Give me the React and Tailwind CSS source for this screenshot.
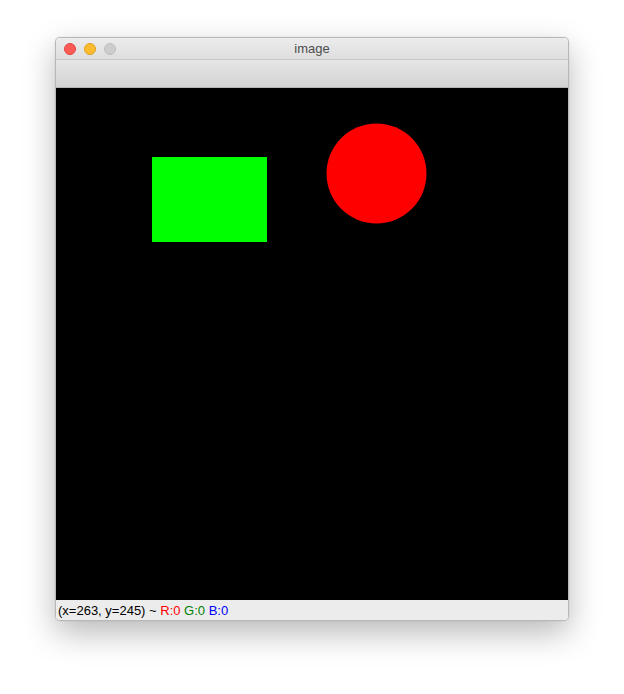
export default function App() {
  return (
    <div className="w-[624px] h-[694px] bg-white pl-[56px] pt-[38px]" style={{ fontFamily: '"Liberation Sans", Arial, sans-serif' }}>
      <div className="w-[512px] rounded-[5px] overflow-hidden border border-[#b8b8b8] box-content -ml-px -mt-px shadow-[0_12px_32px_rgba(0,0,0,0.28),0_0_1px_rgba(0,0,0,0.3)]">
        <div className="relative h-[22px] bg-gradient-to-b from-[#ececec] to-[#dedede] border-b border-[#c8c8c8] flex items-center justify-center">
          <div className="absolute left-[8px] top-[5px] flex gap-[8px]">
            <div className="w-[12px] h-[12px] rounded-full bg-[#fd5b55] border border-[#e0443e]" />
            <div className="w-[12px] h-[12px] rounded-full bg-[#fdbc2d] border border-[#dea123]" />
            <div className="w-[12px] h-[12px] rounded-full bg-[#cdcdcd] border border-[#bdbdbd]" />
          </div>
          <span className="text-[13px] text-[#4d4d4d] leading-none">image</span>
        </div>
        <div className="h-[28px] bg-gradient-to-b from-[#e6e6e6] to-[#d3d3d3] border-b border-[#b5b5b5]" />
        <div className="w-[512px] h-[512px] bg-black">
          <svg width="512" height="512" viewBox="0 0 512 512">
            <rect x="96" y="69" width="115" height="85" fill="#00ff00" />
            <circle cx="320.5" cy="85.5" r="50" fill="#ff0000" />
          </svg>
        </div>
        <div className="h-[20px] bg-[#ececec] flex items-center pl-[2px] text-[13px] leading-none text-black">
          <span>(x=263, y=245) ~&nbsp;</span>
          <span className="text-[#ff0000]">R:0&nbsp;</span>
          <span className="text-[#008000]">G:0&nbsp;</span>
          <span className="text-[#0000ff]">B:0</span>
        </div>
      </div>
    </div>
  );
}
